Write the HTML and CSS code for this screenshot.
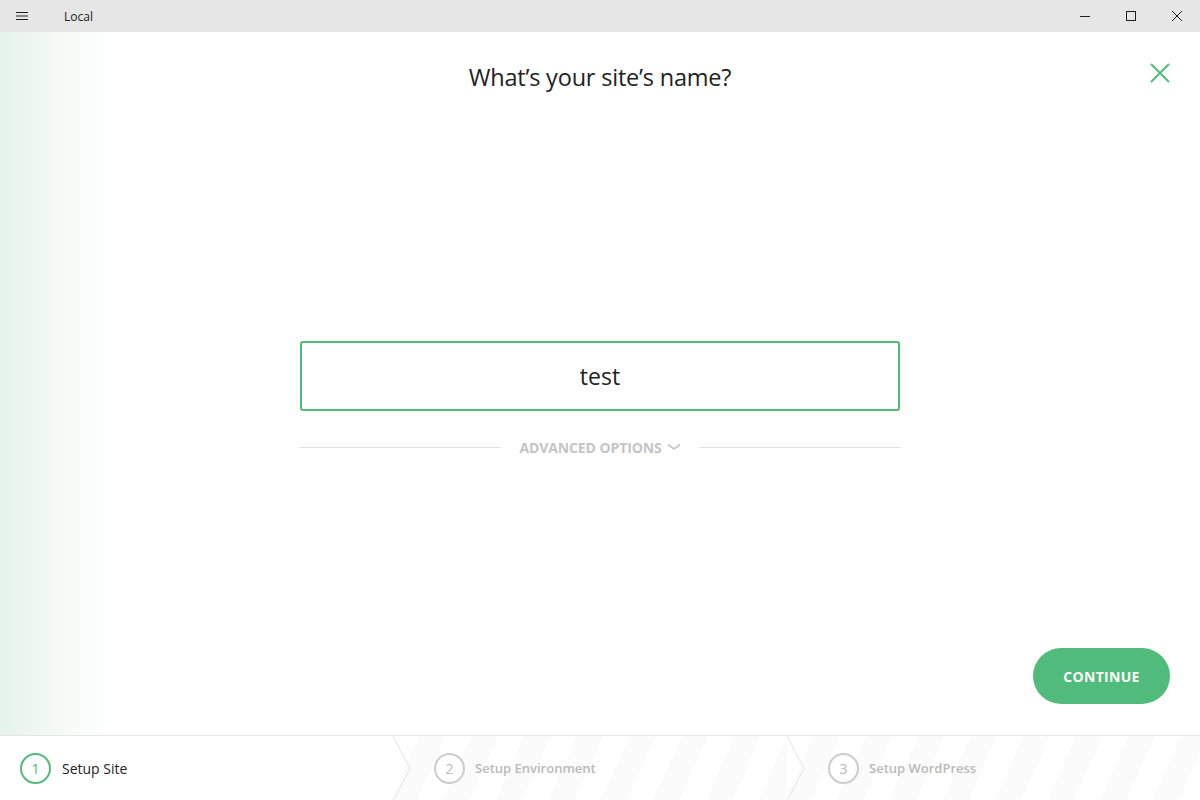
FILE: index.html
```html
<!DOCTYPE html>
<html>
<head>
<meta charset="utf-8">
<link rel="stylesheet" href="styles.css">
</head>
<body>
<div class="app">
  <div class="titlebar">
    <div class="tb-left">
      <svg class="hamburger" width="12" height="10" viewBox="0 0 12 10"><path d="M0 1.5h12M0 5h12M0 8.5h12" stroke="#222" stroke-width="1"/></svg>
      <span class="tb-title">Local</span>
    </div>
    <div class="tb-controls">
      <span class="wbtn"><svg width="10" height="10" viewBox="0 0 10 10"><path d="M0 5.5h10" stroke="#222" stroke-width="1"/></svg></span>
      <span class="wbtn"><svg width="10" height="10" viewBox="0 0 10 10"><rect x="0.5" y="0.5" width="9" height="9" fill="none" stroke="#222" stroke-width="1"/></svg></span>
      <span class="wbtn"><svg width="10" height="10" viewBox="0 0 10 10"><path d="M0 0L10 10M10 0L0 10" stroke="#222" stroke-width="1"/></svg></span>
    </div>
  </div>

  <div class="main">
    <svg class="close-x" width="20" height="20" viewBox="0 0 20 20"><path d="M1 1L19 19M19 1L1 19" stroke="#51bb7b" stroke-width="2"/></svg>
    <h1 class="heading">What’s your site’s name?</h1>
    <div class="form">
      <div class="name-input">test</div>
      <div class="advanced">
        <span class="adv-line"></span>
        <span class="adv-label">ADVANCED OPTIONS
          <svg width="14" height="8" viewBox="0 0 14 8"><path d="M1 1.5L7 6L13 1.5" stroke="#c4c4c4" stroke-width="1.6" fill="none"/></svg>
        </span>
        <span class="adv-line"></span>
      </div>
    </div>
    <button class="continue">CONTINUE</button>
  </div>

  <div class="footer">
    <div class="step active">
      <span class="step-num">1</span>
      <span class="step-name">Setup Site</span>
    </div>
    <div class="step">
      <svg class="chev" width="20" height="65" viewBox="0 0 20 65"><path d="M0 0L17 32.5L0 65" stroke="#e4e4e4" stroke-width="1" fill="none"/></svg>
      <span class="step-num">2</span>
      <span class="step-name">Setup Environment</span>
    </div>
    <div class="step">
      <svg class="chev" width="20" height="65" viewBox="0 0 20 65"><path d="M0 0L17 32.5L0 65" stroke="#e4e4e4" stroke-width="1" fill="none"/></svg>
      <span class="step-num">3</span>
      <span class="step-name">Setup WordPress</span>
    </div>
  </div>
</div>
</body>
</html>
```

FILE: styles.css
```css
* {box-sizing: border-box;}
body {margin: 0; font-family: "Open Sans", "Noto Sans", sans-serif; color: #222;}
.app {width: 1200px; height: 800px; display: flex; flex-direction: column; overflow: hidden;}

.titlebar {height: 32px; background: #e6e6e6; display: flex; justify-content: space-between; align-items: center;}
.tb-left {display: flex; align-items: center;}
.hamburger {margin-left: 16px;}
.tb-title {margin-left: 36px; font-size: 12px; color: #222;}
.tb-controls {display: flex; height: 32px;}
.wbtn {width: 46px; height: 32px; display: flex; align-items: center; justify-content: center;}

.main {flex: 1; position: relative; display: flex; flex-direction: column; align-items: center;
  background: linear-gradient(to right, #e5f3ea 0px, #f3f9f5 55px, #ffffff 112px);}
.close-x {position: absolute; top: 31px; right: 30px;}
.heading {margin: 29px 0 0; font-size: 23.5px; font-weight: 400; line-height: 32px; color: #222; letter-spacing: -0.2px;}

.form {width: 600px; margin-top: 248px;}
.name-input {height: 70px; border: 2px solid #51bb7b; border-radius: 3px; display: flex; align-items: center; justify-content: center;
  font-size: 23px; color: #222;}
.advanced {display: flex; align-items: center; margin-top: 26px; height: 20px;}
.adv-line {flex: 1; height: 1px; background: #e2e2e2;}
.adv-label {padding: 0 19px; font-size: 14px; font-weight: 700; color: #c4c4c4; display: flex; align-items: center; gap: 5px; letter-spacing: -0.1px;}

.continue {margin-top: auto; margin-bottom: 31px; align-self: flex-end; margin-right: 30px; width: 137px; height: 56px;
  border: 0; border-radius: 28px; background: #51bb7b; color: #fff; font-family: "Open Sans", sans-serif; font-weight: 700; font-size: 14px; letter-spacing: 0.3px;}

.footer {height: 65px; border-top: 1px solid #e6e6e6; display: grid; grid-template-columns: 393px 394px 1fr;}
.step {position: relative; display: flex; align-items: center; padding-left: 41px;
  background: repeating-linear-gradient(114deg, #ffffff 0px, #ffffff 24px, #fbfbfb 24px, #fbfbfb 48px);}
.step.active {background: #fff; padding-left: 20px;}
.chev {position: absolute; left: 0; top: 0;}
.step-num {width: 31px; height: 31px; border: 2px solid #cccccc; border-radius: 50%; display: flex; align-items: center; justify-content: center;
  font-size: 14px; color: #bbbbbb; background: #fff;}
.step-name {margin-left: 10px; font-size: 13px; color: #b9b9b9; font-weight: 600;}
.step.active .step-num {border-color: #51bb7b; color: #51bb7b;}
.step.active .step-name {margin-left: 11px; font-size: 14px; color: #222; font-weight: 400;}
```
